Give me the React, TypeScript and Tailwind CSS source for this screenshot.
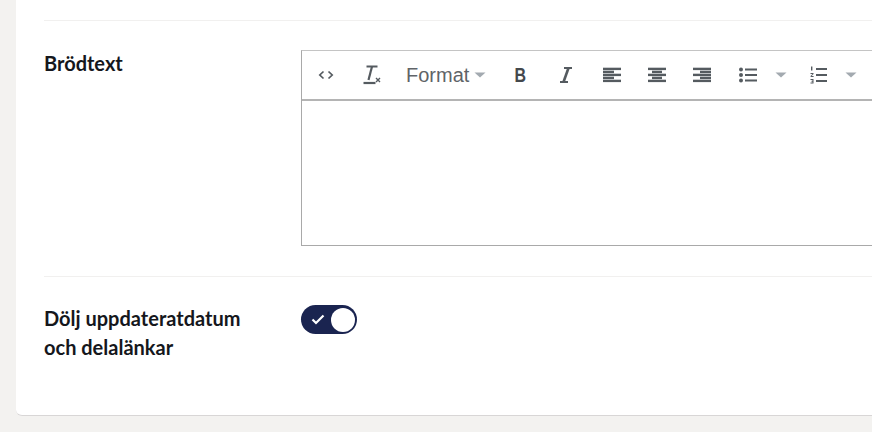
import React from "react";

const G = "#555b60";

function Btn({ w = 46, children }: { w?: number; children: React.ReactNode }) {
  return <div className="flex h-full shrink-0 items-center justify-center" style={{ width: w }}>{children}</div>;
}

function Caret() {
  return (
    <svg width="12" height="6" viewBox="0 0 12 6"><path d="M0.5 0.5h11L6 5.5z" fill="#a3aab0" /></svg>
  );
}

function Lines({ rows }: { rows: [number, number][] }) {
  return (
    <svg width="18" height="16" viewBox="0 0 18 16">
      {rows.map(([x, w], i) => (
        <rect key={i} x={x} y={i * 3 + 0.7} width={w} height="2.4" fill={G} />
      ))}
    </svg>
  );
}

function Toolbar() {
  return (
    <div className="flex h-[50px] shrink-0 items-center border-b-2 border-[#b4b4b4] pb-[1px] pl-px">
      <Btn>
        <svg width="16" height="12" viewBox="0 0 16 12" fill="none" stroke={G} strokeWidth="1.7">
          <path d="M5.5 2.5 1.8 6l3.7 3.5M10.5 2.5 14.2 6l-3.7 3.5" />
        </svg>
      </Btn>
      <Btn>
        <svg width="20" height="20" viewBox="0 0 20 20" fill="none">
          <path d="M4.5 1.5h11" stroke={G} strokeWidth="2" />
          <path d="M10 1.5 6.5 15" stroke={G} strokeWidth="2.2" />
          <path d="M1.5 18h12" stroke={G} strokeWidth="2.2" />
          <path d="m14 13 4 4m0-4-4 4" stroke={G} strokeWidth="1.4" />
        </svg>
      </Btn>
      <div className="flex h-full w-[102px] shrink-0 items-center pl-[11px] font-['Liberation_Sans',sans-serif] text-[20px] text-[#5f6468]">
        <span>Format</span>
        <span className="ml-[5px] flex"><Caret /></span>
      </div>
      <Btn>
        <span className="scale-x-80 font-['Liberation_Sans',sans-serif] text-[20px] leading-none font-bold text-[#44484c]">B</span>
      </Btn>
      <Btn>
        <svg width="14" height="18" viewBox="0 0 14 18" fill="none" stroke={G}>
          <path d="M5 2h8M1 16h8" strokeWidth="1.8" />
          <path d="M9.5 2 4.5 16" strokeWidth="2.6" />
        </svg>
      </Btn>
      <Btn><Lines rows={[[0, 18], [0, 11], [0, 18], [0, 11], [0, 18]]} /></Btn>
      <Btn w={44}><Lines rows={[[0, 18], [4, 10], [0, 18], [4, 10], [0, 18]]} /></Btn>
      <Btn><Lines rows={[[0, 18], [7, 11], [0, 18], [7, 11], [0, 18]]} /></Btn>
      <Btn>
        <svg width="18" height="16" viewBox="0 0 18 16" fill={G}>
          <circle cx="2" cy="2.5" r="2" /><circle cx="2" cy="8" r="2" /><circle cx="2" cy="13.5" r="2" />
          <rect x="6" y="1.5" width="12" height="2" /><rect x="6" y="7" width="12" height="2" /><rect x="6" y="12.5" width="12" height="2" />
        </svg>
      </Btn>
      <Btn w={20}><Caret /></Btn>
      <div className="w-[4px] shrink-0" />
      <Btn>
        <svg width="17" height="18" viewBox="0 0 17 18" fill={G}>
          <path d="M1 0.5h1.4v4H1zM0.5 7h3v1L1.6 10h2v1h-3v-1l1.9-2H0.5zM0.5 13h3v4.5h-3v-1h2v-.8h-1v-.9h1v-.8h-2z" />
          <rect x="6" y="2" width="11" height="2" /><rect x="6" y="8" width="11" height="2" /><rect x="6" y="14" width="11" height="2" />
        </svg>
      </Btn>
      <Btn w={20}><Caret /></Btn>
    </div>
  );
}

function Toggle() {
  return (
    <div className="flex h-[29px] w-[56px] items-center justify-between rounded-full bg-[#1a2450] pr-[2px] pl-[10px]">
      <svg width="14" height="11" viewBox="0 0 14 11" fill="none" stroke="#ffffff" strokeWidth="2.2">
        <path d="M1.5 5.5 5 9l7.5-7.5" />
      </svg>
      <div className="h-[24px] w-[24px] rounded-full bg-white" />
    </div>
  );
}

export default function App() {
  return (
    <div className="h-[432px] w-[872px] overflow-hidden bg-[#f3f2f0] pl-[16px] font-['Lato',sans-serif]">
      <div className="h-[416px] w-[900px] rounded-bl-[6px] border-b border-[#d8d6d6] bg-white pl-[28px]">
        <div className="h-[21px] border-b border-[#f1f0ef]" />
        <div className="flex h-[256px] border-b border-[#f1f0ef] pt-[28px]">
          <div className="w-[257px] shrink-0 text-[20px] leading-[29px] font-bold text-[#15171c]">Brödtext</div>
          <div className="mt-px flex h-[196px] flex-1 flex-col border border-[#a9a9a9] border-t-[#c4c4c4] bg-white">
            <Toolbar />
          </div>
        </div>
        <div className="flex pt-[28px]">
          <div className="-mt-px w-[257px] shrink-0 text-[20px] leading-[29px] font-bold text-[#15171c]">
            Dölj uppdateratdatum<br />och delalänkar
          </div>
          <Toggle />
        </div>
      </div>
    </div>
  );
}
